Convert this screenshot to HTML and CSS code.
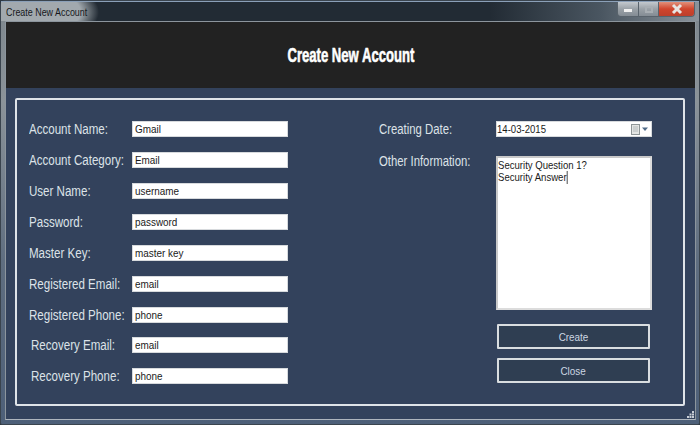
FILE: index.html
```html
<!DOCTYPE html>
<html lang="en">
<head>
<meta charset="utf-8">
<title>Create New Account</title>
<link rel="stylesheet" href="styles.css">
</head>
<body>
<div class="window">
  <div class="titlebar">
    <span class="caption">Create New Account</span>
    <div class="controls">
      <div class="ctl ctl-min"><span class="min-glyph"></span></div>
      <div class="ctl ctl-max"><span class="max-glyph"></span></div>
      <div class="ctl ctl-close">
        <svg width="14" height="12" viewBox="0 0 14 12"><path d="M3 2 L11 10 M11 2 L3 10" stroke="#e8e4e2" stroke-width="3"/></svg>
      </div>
    </div>
  </div>
  <div class="client">
    <header class="banner"><h1 class="banner-title">Create New Account</h1></header>
    <main class="content">
      <section class="panel">
        <div class="col-left">
          <div class="row"><div class="label"><span class="narrow">Account Name:</span></div><div class="field"><span class="tight">Gmail</span></div></div>
          <div class="row"><div class="label"><span class="narrow">Account Category:</span></div><div class="field"><span class="tight">Email</span></div></div>
          <div class="row"><div class="label"><span class="narrow">User Name:</span></div><div class="field"><span class="tight">username</span></div></div>
          <div class="row"><div class="label"><span class="narrow">Password:</span></div><div class="field"><span class="tight">password</span></div></div>
          <div class="row"><div class="label"><span class="narrow">Master Key:</span></div><div class="field"><span class="tight">master key</span></div></div>
          <div class="row"><div class="label"><span class="narrow">Registered Email:</span></div><div class="field"><span class="tight">email</span></div></div>
          <div class="row row-tight"><div class="label"><span class="narrow">Registered Phone:</span></div><div class="field"><span class="tight">phone</span></div></div>
          <div class="row"><div class="label label-indent"><span class="narrow">Recovery Email:</span></div><div class="field"><span class="tight">email</span></div></div>
          <div class="row"><div class="label label-indent"><span class="narrow">Recovery Phone:</span></div><div class="field"><span class="tight">phone</span></div></div>
        </div>
        <div class="col-right">
          <div class="row-right date-row">
            <div class="label-right"><span class="narrow">Creating Date:</span></div>
            <div class="field field-date">
              <span class="tight tight-small">14-03-2015</span>
              <span class="date-icon">
                <svg width="18" height="11" viewBox="0 0 18 11"><rect x="0.500" y="0.500" width="8" height="10" fill="#e4e6e4" stroke="#8f9697"/><path d="M2 3h5M2 5h5M2 7h5" stroke="#b4babb"/><path d="M11 3.500h6l-3 3.500z" fill="#4f6a88"/></svg>
              </span>
            </div>
          </div>
          <div class="row-right info-row">
            <div class="label-right label-info"><span class="narrow">Other Information:</span></div>
            <div class="memo"><span class="tight tight-small">Security Question 1?<br>Security Answer<span class="caret"></span></span></div>
          </div>
          <div class="buttons">
            <div class="btn btn-create"><span class="btn-text">Create</span></div>
            <div class="btn btn-close"><span class="btn-text">Close</span></div>
          </div>
        </div>
      </section>
    </main>
    <div class="grip">
      <svg width="7" height="7" viewBox="0 0 7 7"><path d="M5 0h2v2H5zM2.500 2.500h2v2h-2zM5 2.500h2v2H5zM0 5h2v2H0zM2.500 5h2v2h-2zM5 5h2v2H5z" fill="#c9ced6"/></svg>
    </div>
  </div>
</div>
</body>
</html>
```
FILE: styles.css
```css
* { box-sizing: border-box; }
html, body { margin: 0; padding: 0; }
body { width: 700px; height: 425px; overflow: hidden; background: #2b3640; font-family: "Liberation Sans", Arial, sans-serif; }

.window {
  width: 700px; height: 425px;
  display: flex; flex-direction: column;
  padding: 0 3px 4px 4px;
  border: 1px solid #3a444e;
  border-radius: 5px 5px 2px 2px;
  background: linear-gradient(to bottom, #7d868d 0, #8b9399 100px, #5f6e80 260px, #4d5f78 100%);
}
.titlebar {
  height: 20px; margin: 0 -3px 0 -4px; padding: 0 0 0 5px;
  display: flex; align-items: flex-start;
  border-top: 1px solid #8ba0b8;
  background:
    radial-gradient(ellipse 66px 32px at 32px 10px, #a2a9ae 0, #a2a9ae 72%, rgba(162,169,174,0) 100%),
    linear-gradient(to right, #222b34 0, #222b34 70%, #4a5661 86%, #8b949c 100%);
}
.caption { display: inline-block; font-size: 11px; line-height: 20px; color: #15181c; transform: scaleX(0.81); transform-origin: left center; white-space: nowrap; }
.controls { margin-left: auto; margin-right: 4px; display: flex; height: 15px; border: 1px solid #59636c; border-top: 0; border-radius: 0 0 4px 4px; overflow: hidden; }
.ctl { height: 14px; display: flex; align-items: center; justify-content: center; }
.ctl-min { width: 21px; background: linear-gradient(#c3c8cd, #9aa1a7 50%, #848c94); border-right: 1px solid #59636c; }
.ctl-max { width: 20px; background: linear-gradient(#c3c8cd, #9aa1a7 50%, #848c94); border-right: 1px solid #59636c; }
.ctl-close { width: 35px; background: linear-gradient(#e2907a, #d0452d 50%, #bd3f2b); }
.min-glyph { display: block; width: 8px; height: 3px; background: #f0f0f0; margin-top: 3px; }
.max-glyph { display: block; width: 8px; height: 7px; border: 2px solid #a8aeb3; }

.client { flex: 1; display: flex; flex-direction: column; position: relative; border: 1px solid #8c959d; border-bottom-color: #aeb5bd; min-height: 0; background: #33425c; }
.banner { height: 66px; flex: none; background: #222222; display: flex; align-items: center; justify-content: center; }
.banner-title { margin: 0; font-size: 20px; font-weight: 700; color: #fff; -webkit-text-stroke: 0.6px #fff; transform: scaleX(0.655); white-space: nowrap; }
.content { flex: 1; min-height: 0; padding: 10px 10px 13px 9px; }
.panel { height: 308px; border: 2px solid #dfe3e8; border-radius: 2px; display: flex; padding: 21px 0 0 12px; }

.narrow { display: inline-block; transform: scaleX(0.81); transform-origin: left center; white-space: nowrap; }
.label .narrow { transform: scaleX(0.825); }
.tight { display: inline-block; transform: scaleX(0.9); transform-origin: left center; white-space: nowrap; }
.tight-small { transform: scaleX(0.87); }

.col-left { width: 350px; display: flex; flex-direction: column; gap: 15px; }
.row { display: flex; align-items: center; height: 16px; }
.row-tight { margin-bottom: -1px; }
.label { width: 103px; flex: none; font-size: 14px; line-height: 16px; color: #dde2e8; white-space: nowrap; }
.label-indent { padding-left: 2px; }
.field { width: 156px; height: 16px; background: #fff; border: 1px solid #d7dadd; padding-left: 2px; font-size: 11px; line-height: 14px; color: #1a1a1a; white-space: nowrap; }

.col-right { flex: 1; display: flex; flex-direction: column; }
.row-right { display: flex; align-items: flex-start; }
.date-row { height: 35px; }
.info-row { height: 154px; }
.label-right { width: 117px; flex: none; font-size: 14px; line-height: 17px; color: #dde2e8; white-space: nowrap; }
.label-info { margin-top: -3px; }
.field-date { display: flex; justify-content: space-between; align-items: center; padding-left: 0; }
.date-icon { display: flex; margin-right: 2px; }
.memo { width: 156px; height: 154px; background: #fff; border: 2px solid #c9c9c9; border-right-color: #dcdcdc; border-bottom-color: #dcdcdc; padding: 1px 0; font-size: 11px; line-height: 12px; color: #1a1a1a; }
.caret { display: inline-block; width: 1px; height: 13px; background: #333; vertical-align: top; }
.buttons { margin: 14px 0 0 118px; display: flex; flex-direction: column; gap: 9px; width: 153px; }
.btn { height: 25px; border: 2px solid #d9dde0; border-radius: 1px; background: #2f3e52; color: #ccd6e2; font-size: 11px; display: flex; align-items: center; justify-content: center; }
.btn-text { display: inline-block; transform: scaleX(0.9); }
.grip { position: absolute; right: 1px; bottom: 1px; display: flex; }
```
